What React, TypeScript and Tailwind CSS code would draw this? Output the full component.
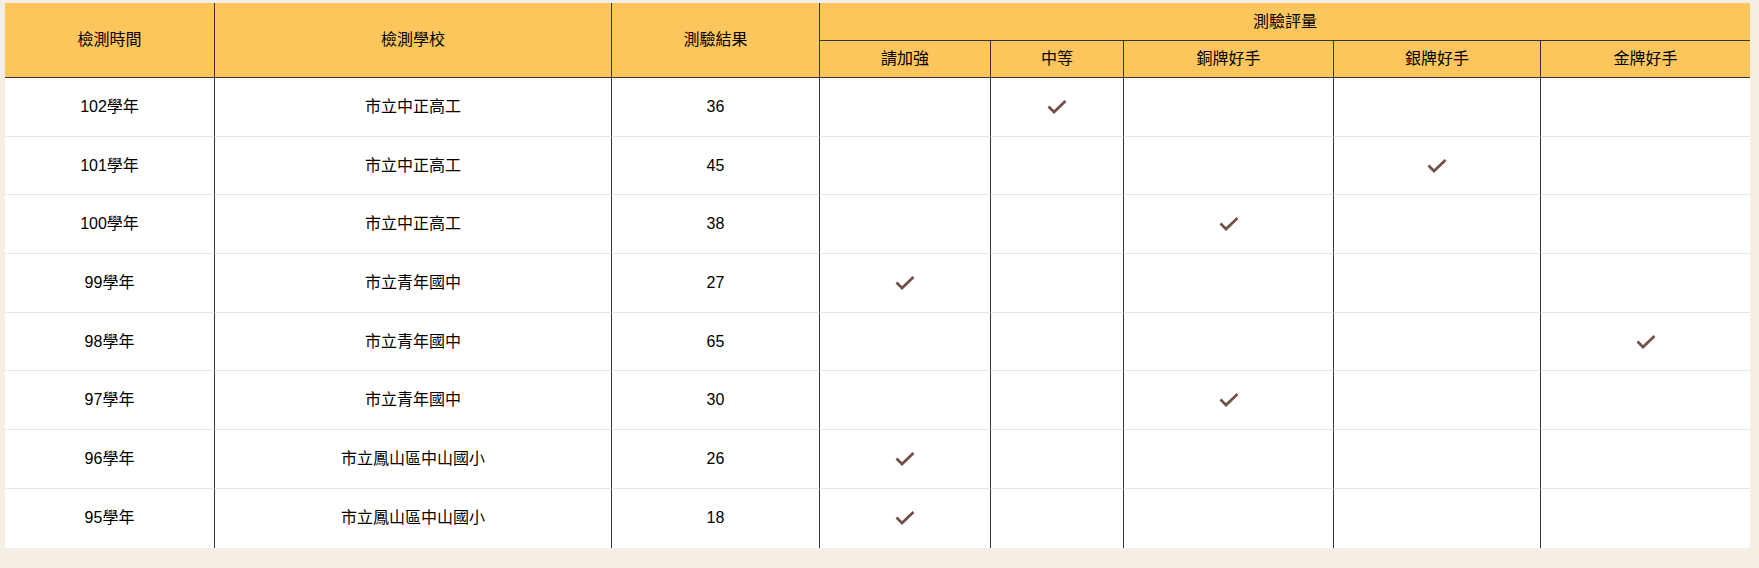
import * as React from "react"

const levels = ["請加強", "中等", "銅牌好手", "銀牌好手", "金牌好手"]

const records = [
  { year: "102學年", school: "市立中正高工", score: 36, level: 1 },
  { year: "101學年", school: "市立中正高工", score: 45, level: 3 },
  { year: "100學年", school: "市立中正高工", score: 38, level: 2 },
  { year: "99學年", school: "市立青年國中", score: 27, level: 0 },
  { year: "98學年", school: "市立青年國中", score: 65, level: 4 },
  { year: "97學年", school: "市立青年國中", score: 30, level: 2 },
  { year: "96學年", school: "市立鳳山區中山國小", score: 26, level: 0 },
  { year: "95學年", school: "市立鳳山區中山國小", score: 18, level: 0 },
]

function Check() {
  return (
    <svg width="20" height="14" viewBox="0 0 20 14" className="mx-auto block">
      <polyline
        points="1.5,6.5 7,12 18.5,1"
        fill="none"
        stroke="#74504a"
        strokeWidth="2.7"
      />
    </svg>
  )
}

export default function App() {
  return (
    <div
      className="min-h-screen bg-[#f5eee4] pt-[3px] pl-[5px] pr-[9px] text-black"
      style={{ fontFamily: '"Liberation Sans", Arial, "Noto Sans CJK TC", sans-serif' }}
    >
      <table className="w-full table-fixed border-separate border-spacing-0 bg-white text-base">
        <colgroup>
          <col className="w-[209px]" />
          <col className="w-[397px]" />
          <col className="w-[208px]" />
          <col className="w-[171px]" />
          <col className="w-[133px]" />
          <col className="w-[210px]" />
          <col className="w-[207px]" />
          <col />
        </colgroup>
        <thead className="bg-[#fcc65d]">
          <tr>
            <th rowSpan={2} className="border-b border-[#333] font-normal">
              檢測時間
            </th>
            <th rowSpan={2} className="border-b border-l border-[#333] font-normal">
              檢測學校
            </th>
            <th rowSpan={2} className="border-b border-l border-[#333] font-normal">
              測驗結果
            </th>
            <th colSpan={5} className="h-[38px] border-b border-l border-[#333] font-normal">
              測驗評量
            </th>
          </tr>
          <tr>
            {levels.map((l) => (
              <th key={l} className="h-[37px] border-b border-l border-[#333] font-normal">
                {l}
              </th>
            ))}
          </tr>
        </thead>
        <tbody>
          {records.map((r, i) => {
            const last = i === records.length - 1
            const rowLine = last ? "" : "border-b border-b-[#e6e6e6]"
            return (
              <tr key={r.year} className="h-[58.7px]">
                <td className={`text-center ${rowLine}`}>{r.year}</td>
                <td className={`border-l border-l-[#333] text-center ${rowLine}`}>{r.school}</td>
                <td className={`border-l border-l-[#333] text-center ${rowLine}`}>{r.score}</td>
                {levels.map((l, j) => (
                  <td key={l} className={`border-l border-l-[#333] ${rowLine}`}>
                    {r.level === j ? <Check /> : null}
                  </td>
                ))}
              </tr>
            )
          })}
        </tbody>
      </table>
    </div>
  )
}
